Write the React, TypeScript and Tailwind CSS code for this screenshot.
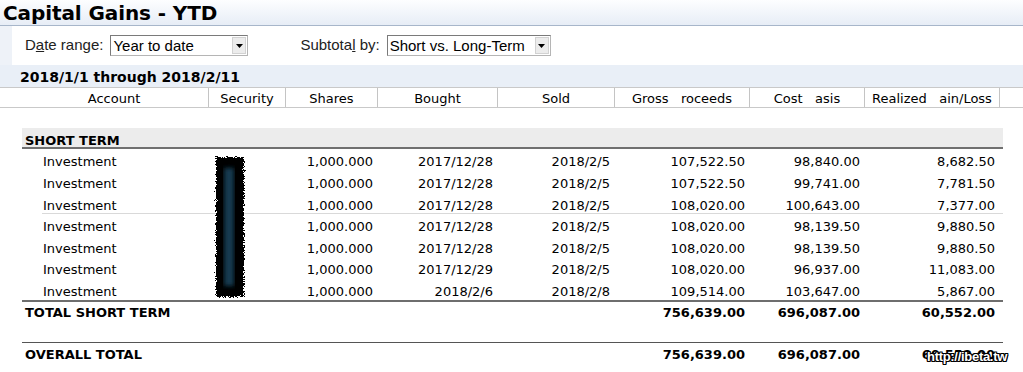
import React from "react";

const cols = [
  { label: "Account", w: "w-[189px]" },
  { label: "Security", w: "w-[77px]" },
  { label: "Shares", w: "w-[92px]" },
  { label: "Bought", w: "w-[120px]" },
  { label: "Sold", w: "w-[117px]" },
  { label: "Gross   roceeds", w: "w-[135px]" },
  { label: "Cost   asis", w: "w-[115px]" },
  { label: "Realized   ain/Loss", w: "w-[135px]" },
];

const rows = [
  { bought: "2017/12/28", sold: "2018/2/5", gross: "107,522.50", cost: "98,840.00", gain: "8,682.50", h: "h-[21px]" },
  { bought: "2017/12/28", sold: "2018/2/5", gross: "107,522.50", cost: "99,741.00", gain: "7,781.50", h: "h-[22px]" },
  { bought: "2017/12/28", sold: "2018/2/5", gross: "108,020.00", cost: "100,643.00", gain: "7,377.00", h: "h-[22px]", line: true },
  { bought: "2017/12/28", sold: "2018/2/5", gross: "108,020.00", cost: "98,139.50", gain: "9,880.50", h: "h-[21px]" },
  { bought: "2017/12/28", sold: "2018/2/5", gross: "108,020.00", cost: "98,139.50", gain: "9,880.50", h: "h-[22px]" },
  { bought: "2017/12/29", sold: "2018/2/5", gross: "108,020.00", cost: "96,937.00", gain: "11,083.00", h: "h-[21px]" },
  { bought: "2018/2/6", sold: "2018/2/8", gross: "109,514.00", cost: "103,647.00", gain: "5,867.00", h: "h-[22px]" },
];

const Select = ({ value, w }: { value: string; w: string }) => (
  <div className={`${w} h-[21px] flex items-center bg-white border border-t-[#7a7a7a] border-l-[#7a7a7a] border-r-[#b5b5b5] border-b-[#b5b5b5] pl-[2px] pr-[1px]`}>
    <span className="flex-1 leading-none text-black">{value}</span>
    <div className="w-[14px] h-[17px] flex items-center justify-center bg-[#ececec] border border-[#d2d2d2]">
      <svg width="7" height="4" viewBox="0 0 7 4">
        <path d="M0 0h7L3.5 4z" fill="#000" />
      </svg>
    </div>
  </div>
);

// redaction mark over the Security column
const Scribble = () => (
  <svg width="36" height="146" viewBox="0 0 36 146" className="absolute left-[212px] top-[5px]">
    <defs>
      <filter id="rough" x="-20%" y="-5%" width="140%" height="110%">
        <feTurbulence type="fractalNoise" baseFrequency="1.2" numOctaves="2" seed="5" />
        <feDisplacementMap in="SourceGraphic" scale="6" />
      </filter>
      <filter id="soft">
        <feGaussianBlur stdDeviation="2" />
      </filter>
    </defs>
    <g filter="url(#rough)">
      <rect x="4" y="3" width="28" height="140" fill="#050505" />
    </g>
    <rect x="12" y="14" width="10" height="118" fill="#133a50" filter="url(#soft)" />
  </svg>
);

export default function App() {
  return (
    <div className="w-[1023px] h-[372px] overflow-hidden bg-white relative text-black font-['DejaVu_Sans',sans-serif] text-[13px]">
      {/* title */}
      <div className="h-[26px] border-b border-[#a7b6ca] bg-gradient-to-b from-[#fdfeff] to-[#e7edf6] pl-[3px] flex items-center">
        <span className="font-bold text-[20px] leading-none tracking-[-0.1px]">Capital Gains - YTD</span>
      </div>

      {/* controls */}
      <div className="h-[39px] bg-[#eef2f8] pl-[12px]">
        <div className="h-full bg-white flex items-center pl-[13px] font-['Liberation_Sans',sans-serif] text-[15px] text-[#222]">
          <span className="mr-[7px]">
            D<u>a</u>te range:
          </span>
          <Select value="Year to date" w="w-[138px]" />
          <span className="ml-[52px] mr-[7px]">
            Subtota<u>l</u> by:
          </span>
          <Select value="Short vs. Long-Term" w="w-[164px]" />
        </div>
      </div>

      {/* date range */}
      <div className="h-[22px] bg-[#e9eff7] pl-[20px] flex items-center pt-px">
        <span className="font-bold text-[14px] leading-none">2018/1/1 through 2018/2/11</span>
      </div>

      {/* column headers */}
      <div className="h-[21px] border-t border-b border-[#c9c9c9] pl-[20px] flex">
        {cols.map((c) => (
          <div key={c.label} className={`${c.w} border-r border-[#c4c4c4] flex items-center justify-center whitespace-pre pt-[2px]`}>
            {c.label}
          </div>
        ))}
      </div>

      <div className="h-[20px]" />

      {/* section */}
      <div className="ml-[22px] w-[981px] h-[21px] bg-[#ececec] border-b-2 border-[#707070] pl-[3px] pt-[6px] flex items-center font-bold">
        SHORT TERM
      </div>

      <div className="relative">
        {rows.map((r, i) => (
          <div key={i} className={`${r.h} flex pl-[20px] pt-[5px] items-center ${r.line ? "relative" : ""}`}>
            <div className="w-[189px] pl-[23px]">Investment</div>
            <div className="w-[77px]" />
            <div className="w-[92px] text-right pr-[5px]">1,000.000</div>
            <div className="w-[120px] text-right pr-[5px]">{r.bought}</div>
            <div className="w-[117px] text-right pr-[5px]">{r.sold}</div>
            <div className="w-[135px] text-right pr-[5px]">{r.gross}</div>
            <div className="w-[115px] text-right pr-[5px]">{r.cost}</div>
            <div className="w-[135px] text-right pr-[5px]">{r.gain}</div>
            {r.line && <div className="absolute left-[42px] right-[20px] bottom-0 h-px bg-[#d9d9d9]" />}
          </div>
        ))}
        <Scribble />
      </div>

      <div className="ml-[22px] w-[981px] h-[2px] bg-[#6e6e6e]" />

      <div className="h-[20px] flex pl-[22px] pt-[2px] items-center font-bold">
        <div className="w-[593px] pl-[3px]">TOTAL SHORT TERM</div>
        <div className="w-[135px] text-right pr-[5px]">756,639.00</div>
        <div className="w-[115px] text-right pr-[5px]">696,087.00</div>
        <div className="w-[135px] text-right pr-[5px]">60,552.00</div>
      </div>

      <div className="h-[20px]" />
      <div className="ml-[22px] w-[981px] h-px bg-[#555]" />

      <div className="h-[21px] flex pl-[22px] pt-[2px] items-center font-bold">
        <div className="w-[593px] pl-[3px]">OVERALL TOTAL</div>
        <div className="w-[135px] text-right pr-[5px]">756,639.00</div>
        <div className="w-[115px] text-right pr-[5px]">696,087.00</div>
        <div className="w-[135px] text-right pr-[5px]">60,552.00</div>
      </div>

      {/* watermark */}
      <div className="absolute left-[927px] top-[350px] font-['Liberation_Sans',sans-serif] font-bold text-[13px] leading-none text-white tracking-[-0.3px] [text-shadow:1px_0_0_#000,-1px_0_0_#000,0_1px_0_#000,0_-1px_0_#000,1px_1px_0_#000,-1px_-1px_0_#000,1px_-1px_0_#000,-1px_1px_0_#000]">
        http://ibeta.tw
      </div>
    </div>
  );
}
